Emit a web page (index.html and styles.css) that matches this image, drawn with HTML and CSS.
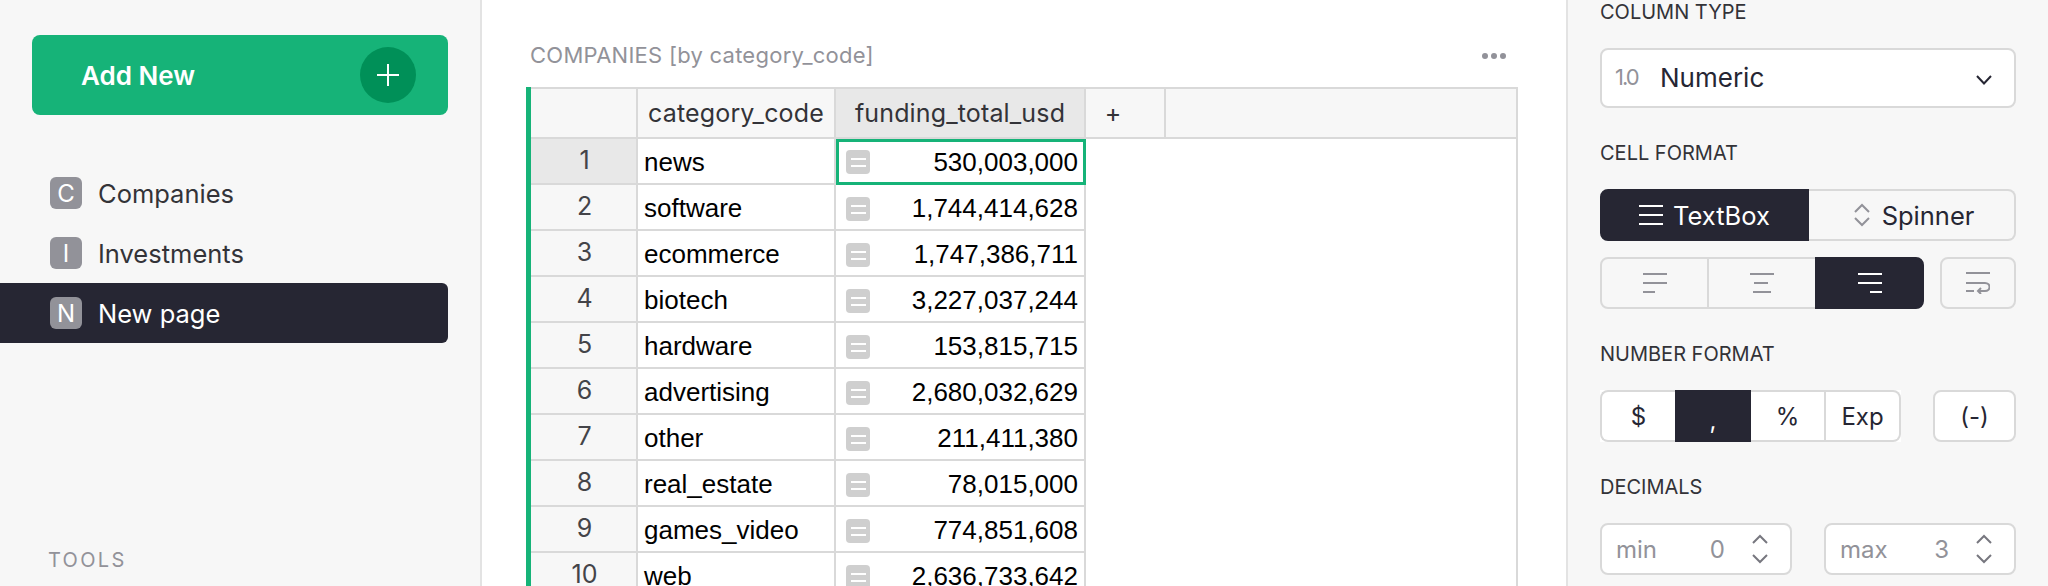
FILE: index.html
```html
<!DOCTYPE html>
<html>
<head>
	<meta charset="utf-8">
	<link rel="stylesheet" href="styles.css">
	<title>Companies</title>
</head>
<body>
	<div class="sidebar">
		<div class="addNew">
			<span>Add New</span>
			<div class="addCircle">
				<svg width="24" height="24" viewBox="0 0 24 24"><path d="M12 1V23M1 12H23" stroke="#fff" stroke-width="2"/></svg>
			</div>
		</div>
		<div class="pages">
			<div class="pageRow"><span class="pageInitial">C</span>Companies</div>
			<div class="pageRow"><span class="pageInitial">I</span>Investments</div>
			<div class="pageRow active"><span class="pageInitial">N</span>New page</div>
		</div>
		<div class="toolsLabel">TOOLS</div>
	</div>

	<div class="main">
		<div class="sectionHead">
			<span>COMPANIES [by category_code]</span>
			<div class="dots"><i></i><i></i><i></i></div>
		</div>
		<div class="sheet">
			<div class="headRow">
				<div class="rowNum"></div>
				<div class="colHead colText">category_code</div>
				<div class="colHead colValue picked">funding_total_usd</div>
				<div class="colHead colAdd">+</div>
				<div class="colHead colRest"></div>
			</div>
			<div class="row">
				<div class="rowNum picked">1</div>
				<div class="cell colText">news</div>
				<div class="cell colValue selected"><span class="widget"></span>530,003,000</div>
			</div>
			<div class="row">
				<div class="rowNum">2</div>
				<div class="cell colText">software</div>
				<div class="cell colValue"><span class="widget"></span>1,744,414,628</div>
			</div>
			<div class="row">
				<div class="rowNum">3</div>
				<div class="cell colText">ecommerce</div>
				<div class="cell colValue"><span class="widget"></span>1,747,386,711</div>
			</div>
			<div class="row">
				<div class="rowNum">4</div>
				<div class="cell colText">biotech</div>
				<div class="cell colValue"><span class="widget"></span>3,227,037,244</div>
			</div>
			<div class="row">
				<div class="rowNum">5</div>
				<div class="cell colText">hardware</div>
				<div class="cell colValue"><span class="widget"></span>153,815,715</div>
			</div>
			<div class="row">
				<div class="rowNum">6</div>
				<div class="cell colText">advertising</div>
				<div class="cell colValue"><span class="widget"></span>2,680,032,629</div>
			</div>
			<div class="row">
				<div class="rowNum">7</div>
				<div class="cell colText">other</div>
				<div class="cell colValue"><span class="widget"></span>211,411,380</div>
			</div>
			<div class="row">
				<div class="rowNum">8</div>
				<div class="cell colText">real_estate</div>
				<div class="cell colValue"><span class="widget"></span>78,015,000</div>
			</div>
			<div class="row">
				<div class="rowNum">9</div>
				<div class="cell colText">games_video</div>
				<div class="cell colValue"><span class="widget"></span>774,851,608</div>
			</div>
			<div class="row">
				<div class="rowNum">10</div>
				<div class="cell colText">web</div>
				<div class="cell colValue"><span class="widget"></span>2,636,733,642</div>
			</div>
		</div>
	</div>

	<div class="panel">
		<div class="label">COLUMN TYPE</div>
		<div class="select">
			<span class="typeIcon">1.0</span>
			<span class="typeName">Numeric</span>
			<svg class="chevron" width="18" height="12" viewBox="0 0 18 12"><path d="M2 2L9 9.5L16 2" fill="none" stroke="#262633" stroke-width="2"/></svg>
		</div>

		<div class="label">CELL FORMAT</div>
		<div class="btnRow">
			<div class="btn dark toggleBox firstBtn">
				<svg width="24" height="20" viewBox="0 0 24 20"><path d="M0 1H24M0 10H24M0 19H24" stroke="#fff" stroke-width="2"/></svg>
				TextBox
			</div>
			<div class="btn toggleSpin lastBtn">
				<svg width="16" height="24" viewBox="0 0 16 24"><path d="M1 9L8 2L15 9M1 15L8 22L15 15" fill="none" stroke="#929299" stroke-width="2"/></svg>
				Spinner
			</div>
		</div>
		<div class="btnRow alignRow">
			<div class="btn alignLeft firstBtn">
				<svg width="24" height="20" viewBox="0 0 24 20"><path d="M0 1H24M0 10H24M0 19H12" stroke="#929299" stroke-width="2"/></svg>
			</div>
			<div class="btn alignMid">
				<svg width="24" height="20" viewBox="0 0 24 20"><path d="M0 1H24M4 10H18M3 19H21" stroke="#929299" stroke-width="2"/></svg>
			</div>
			<div class="btn dark alignRight lastBtn">
				<svg width="24" height="20" viewBox="0 0 24 20"><path d="M0 1H24M0 10H24M12 19H24" stroke="#fff" stroke-width="2"/></svg>
			</div>
			<div class="btn wrapBtn">
				<svg width="24" height="22" viewBox="0 0 24 22"><path d="M0 1H24M0 11H19C25 11 25 19 19 19H13M0 19H8M15 16L12 19L15 22" fill="none" stroke="#929299" stroke-width="2"/></svg>
			</div>
		</div>

		<div class="label">NUMBER FORMAT</div>
		<div class="btnRow">
			<div class="numGroup">
				<div class="btn plain numDollar">$</div>
				<div class="btn dark numComma">,</div>
				<div class="btn plain numPercent">%</div>
				<div class="btn plain numExp">Exp</div>
			</div>
			<div class="btn plain negBtn">(-)</div>
		</div>

		<div class="label">DECIMALS</div>
		<div class="decimals">
			<div class="decimalBox">
				<span class="decName">min</span>
				<span class="decValue">0</span>
				<svg width="16" height="30" viewBox="0 0 16 30"><path d="M1 9L8 2L15 9M1 21L8 28L15 21" fill="none" stroke="#77777f" stroke-width="2"/></svg>
			</div>
			<div class="decimalBox">
				<span class="decName">max</span>
				<span class="decValue">3</span>
				<svg width="16" height="30" viewBox="0 0 16 30"><path d="M1 9L8 2L15 9M1 21L8 28L15 21" fill="none" stroke="#77777f" stroke-width="2"/></svg>
			</div>
		</div>
	</div>
</body>
</html>
```
FILE: styles.css
```css
*{
	box-sizing: border-box;
}
html, body{
	margin: 0;
	height: 100%;
}
body{
	display: flex;
	height: 586px;
	overflow: hidden;
	background-color: white;
	color: #333338;
	font-family: 'Inter', sans-serif;
}

/* left column */
.sidebar{
	display: flex;
	flex-direction: column;
	width: 482px;
	flex: none;
	padding-top: 35px;
	padding-bottom: 14px;
	background-color: #f7f7f7;
	border-right: solid 2px #e3e3e3;
}
.addNew{
	display: flex;
	align-items: center;
	justify-content: space-between;
	width: 416px;
	height: 80px;
	margin-left: 32px;
	padding: 0 32px 0 49px;
	border-radius: 8px;
	background-color: #16b378;
	color: white;
	font-size: 26px;
	font-weight: 600;
}
.addCircle{
	display: flex;
	align-items: center;
	justify-content: center;
	width: 56px;
	height: 56px;
	border-radius: 50%;
	background-color: #009058;
}
.pages{
	margin-top: 48px;
}
.pageRow{
	display: flex;
	align-items: center;
	gap: 16px;
	width: 448px;
	height: 60px;
	padding-left: 50px;
	border-radius: 0 6px 6px 0;
	font-size: 25.5px;
}
.pageRow.active{
	background-color: #262633;
	color: white;
}
.pageInitial{
	display: flex;
	align-items: center;
	justify-content: center;
	width: 32px;
	height: 32px;
	border-radius: 6px;
	background-color: #929299;
	color: white;
	font-size: 24px;
}
.toolsLabel{
	margin-top: auto;
	margin-left: 48px;
	line-height: 24px;
	font-size: 20px;
	letter-spacing: 2.3px;
	color: #929299;
}

/* table */
.main{
	flex: 1;
	padding: 44px 0 0 44px;
	overflow: hidden;
}
.sectionHead{
	display: flex;
	align-items: center;
	justify-content: space-between;
	width: 992px;
	height: 24px;
	margin-bottom: 19px;
	padding: 0 12px 2px 4px;
	font-size: 22px;
	letter-spacing: 0.25px;
	color: #929299;
}
.dots{
	display: flex;
	gap: 3px;
	margin-top: 2px;
}
.dots i{
	width: 6px;
	height: 6px;
	border-radius: 50%;
	background-color: #929299;
}
.sheet{
	width: 992px;
	border-left: solid 5px #16b378;
}
.headRow{
	display: flex;
	height: 52px;
	border-top: solid 2px #d9d9d9;
	border-bottom: solid 2px #d9d9d9;
	border-right: solid 2px #d9d9d9;
	background-color: #f7f7f7;
	font-size: 25px;
	letter-spacing: 0.15px;
}
.row{
	display: flex;
	height: 46px;
	border-right: solid 2px #d9d9d9;
}
.rowNum{
	display: flex;
	align-items: center;
	justify-content: center;
	width: 107px;
	padding: 0 0 3px 2px;
	border-right: solid 2px #d9d9d9;
	border-bottom: solid 2px #d9d9d9;
	background-color: #f7f7f7;
	font-size: 25px;
	color: #444449;
}
.headRow .rowNum{
	border-bottom: 0;
}
.rowNum.picked, .colHead.picked{
	background-color: #e8e8e8;
}
.colHead{
	display: flex;
	align-items: center;
	justify-content: center;
	border-right: solid 2px #d9d9d9;
}
.colText{
	width: 198px;
}
.colValue{
	width: 250px;
}
.colAdd{
	width: 80px;
	padding-right: 24px;
}
.colRest{
	flex: 1;
	border-right: 0;
}
.cell{
	display: flex;
	align-items: center;
	justify-content: space-between;
	padding: 3px 6px 0 6px;
	border-right: solid 2px #d9d9d9;
	border-bottom: solid 2px #d9d9d9;
	font-family: 'Liberation Sans', sans-serif;
	font-size: 26px;
	color: black;
}
.cell.colValue{
	padding-left: 10px;
}
.cell.selected{
	padding-left: 7px;
	padding-right: 5px;
	padding-top: 0;
	border: solid 3px #16b378;
}
.widget{
	width: 24px;
	height: 24px;
	border-radius: 4px;
	background-color: #cfcfcf;
	background-image: linear-gradient(white, white), linear-gradient(white, white);
	background-size: 15px 2px;
	background-repeat: no-repeat;
	background-position: center 8px, center 15px;
}

/* right column */
.panel{
	width: 482px;
	flex: none;
	padding: 0 32px;
	background-color: #f7f7f7;
	border-left: solid 2px #e3e3e3;
}
.label{
	height: 24px;
	margin-top: 33px;
	margin-bottom: 24px;
	line-height: 24px;
	font-size: 20px;
	color: #333338;
}
.label:first-child{
	margin-top: 0;
}
.select{
	display: flex;
	align-items: center;
	height: 60px;
	padding: 0 21px 2px 13px;
	border: solid 2px #d9d9d9;
	border-radius: 8px;
	background-color: white;
	font-size: 26px;
	color: #262633;
}
.typeIcon{
	width: 45px;
	font-size: 22px;
	letter-spacing: -2px;
	color: #929299;
}
.chevron{
	margin-left: auto;
	margin-top: 5px;
}
.btnRow{
	display: flex;
	height: 52px;
}
.alignRow{
	margin-top: 16px;
}
.btn{
	display: flex;
	align-items: center;
	justify-content: center;
	gap: 10px;
	border: solid 2px #d9d9d9;
	font-size: 24px;
	color: #262633;
}
.btn.dark{
	border-color: #262633;
	background-color: #262633;
	color: white;
}
.firstBtn{
	border-radius: 8px 0 0 8px;
}
.lastBtn{
	border-radius: 0 8px 8px 0;
}
.toggleBox{
	width: 209px;
	font-size: 25.5px;
}
.toggleSpin{
	width: 207px;
	gap: 12px;
	padding-left: 5px;
	border-left: 0;
	font-size: 25.5px;
}
.alignLeft{
	width: 109px;
}
.alignMid{
	width: 106px;
	border-left: 0;
	border-right: 0;
}
.alignRight{
	width: 109px;
}
.wrapBtn{
	width: 76px;
	margin-left: 16px;
	border-radius: 8px;
}
.numGroup{
	display: flex;
	width: 301px;
	background-color: white;
}
.btn.plain{
	background-color: white;
}
.numDollar{
	width: 75px;
	border-right: 0;
	border-radius: 8px 0 0 8px;
}
.numComma{
	width: 76px;
	padding-top: 9px;
}
.numPercent{
	width: 75px;
	border-left: 0;
}
.numExp{
	width: 75px;
	border-left: 0;
	border-radius: 0 8px 8px 0;
}
.negBtn{
	width: 83px;
	margin-left: 32px;
	border-radius: 8px;
}
.decimals{
	display: flex;
	justify-content: space-between;
}
.decimalBox{
	display: flex;
	align-items: center;
	width: 192px;
	height: 52px;
	padding: 0 22px 0 14px;
	border: solid 2px #d9d9d9;
	border-radius: 8px;
	background-color: white;
	font-size: 24px;
	color: #929299;
}
.decValue{
	margin-left: auto;
	margin-right: 27px;
}
```
